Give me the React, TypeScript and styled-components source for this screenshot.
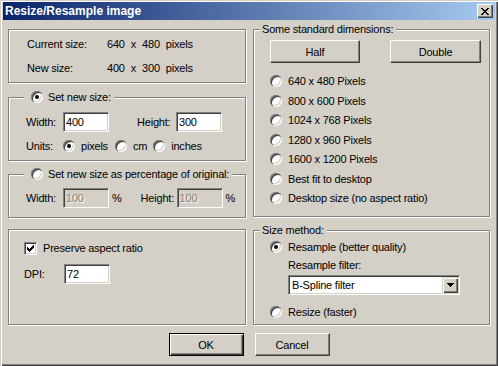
import styled, { createGlobalStyle } from 'styled-components';

const GlobalStyle = createGlobalStyle`
  html, body {
    margin: 0;
    padding: 0;
    background: #d4d0c8;
  }
  body {
    font-family: "Liberation Sans", Arial, sans-serif;
    font-size: 11px;
    letter-spacing: -0.2px;
    color: #000;
  }
`;

const Window = styled.div`
  width: 498px;
  height: 366px;
  box-sizing: border-box;
  padding: 2px 3px 3px 3px;
  background: #d4d0c8;
  box-shadow: inset 1px 1px 0 #d4d0c8, inset 2px 2px 0 #fff, inset -1px -1px 0 #404040,
    inset -2px -2px 0 #808080;
  display: flex;
  flex-direction: column;
`;

const TitleBar = styled.div`
  height: 18px;
  display: flex;
  align-items: center;
  justify-content: space-between;
  padding: 0 2px 0 2px;
  background: linear-gradient(to right, #0a246a, #a6caf0);
`;

const TitleText = styled.span`
  color: #fff;
  font-weight: bold;
  font-size: 12px;
  letter-spacing: 0;
`;

const CloseButton = styled.div`
  width: 16px;
  height: 14px;
  box-sizing: border-box;
  background: #d4d0c8;
  box-shadow: inset 1px 1px 0 #fff, inset -1px -1px 0 #404040, inset -2px -2px 0 #808080;
  display: flex;
  align-items: center;
  justify-content: center;
`;

const Body = styled.div`
  display: flex;
  flex-direction: column;
  align-items: center;
`;

const Columns = styled.div`
  display: grid;
  grid-template-columns: 238px 237px;
  column-gap: 7px;
  padding: 0 5px;
  align-self: stretch;
`;

const Column = styled.div`
  display: flex;
  flex-direction: column;
`;

const GroupBox = styled.div<{ $height: number; $top: number; $pad?: string }>`
  position: relative;
  box-sizing: border-box;
  height: ${(p) => p.$height}px;
  margin-top: ${(p) => p.$top}px;
  padding: ${(p) => p.$pad || '0'};
  border: 1px solid #808080;
  box-shadow: inset 1px 1px 0 #fff, 1px 1px 0 #fff;
  display: flex;
  flex-direction: column;
`;

const Caption = styled.div<{ $left: number; $padLeft?: number }>`
  position: absolute;
  top: -8px;
  left: ${(p) => p.$left}px;
  height: 14px;
  line-height: 14px;
  padding: 0 3px 0 ${(p) => p.$padLeft ?? 2}px;
  background: #d4d0c8;
  display: flex;
  align-items: center;
  gap: 5px;
  white-space: nowrap;
`;

const InfoRow = styled.div<{ $gap?: number }>`
  display: flex;
  height: 14px;
  line-height: 14px;
  margin-top: ${(p) => p.$gap || 0}px;
`;

const InfoLabel = styled.span`
  width: 80px;
`;

const InfoValue = styled.span`
  display: flex;
  gap: 6px;
`;

const FieldRow = styled.div<{ $gap?: number }>`
  display: flex;
  align-items: center;
  height: 20px;
  margin-top: ${(p) => p.$gap || 0}px;
`;

const Label = styled.span<{ $w?: number; $ml?: number }>`
  width: ${(p) => (p.$w ? `${p.$w}px` : 'auto')};
  margin-left: ${(p) => p.$ml || 0}px;
  flex: none;
  white-space: nowrap;
`;

const Field = styled.input<{ $w?: number }>`
  width: ${(p) => p.$w || 46}px;
  height: 20px;
  box-sizing: border-box;
  margin: 0;
  padding: 0 2px;
  font: inherit;
  letter-spacing: inherit;
  color: #000;
  background: #fff;
  border: 1px solid;
  border-color: #808080 #fff #fff #808080;
  box-shadow: inset 1px 1px 0 #404040, inset -1px -1px 0 #d4d0c8;
  outline: none;
  flex: none;

  &:disabled {
    background: #d4d0c8;
    color: #808080;
    text-shadow: 1px 1px 0 #fff;
  }
`;

const Percent = styled.span`
  margin-left: 3px;
  color: #000;
`;

const OptionRow = styled.div<{ $gap?: number; $indent?: number }>`
  display: flex;
  align-items: center;
  height: 14px;
  margin-top: ${(p) => p.$gap || 0}px;
  margin-left: ${(p) => p.$indent || 0}px;
  white-space: nowrap;
`;

const Option = styled.span<{ $after?: number }>`
  display: inline-flex;
  align-items: center;
  gap: 6px;
  margin-right: ${(p) => p.$after || 0}px;
`;

const RadioDot = styled.span<{ $checked?: boolean }>`
  position: relative;
  width: 12px;
  height: 12px;
  border-radius: 50%;
  background: #fff;
  flex: none;
  box-shadow: inset 1px 1px 0 #808080, inset 2px 2px 0 #404040, inset -1px -1px 0 #fff,
    inset -2px -2px 0 #d4d0c8;

  &::after {
    content: '';
    display: ${(p) => (p.$checked ? 'block' : 'none')};
    position: absolute;
    left: 4px;
    top: 4px;
    width: 4px;
    height: 4px;
    border-radius: 50%;
    background: #000;
  }
`;

const CheckBox = styled.span`
  width: 13px;
  height: 13px;
  box-sizing: border-box;
  background: #fff;
  border: 1px solid;
  border-color: #808080 #fff #fff #808080;
  box-shadow: inset 1px 1px 0 #404040, inset -1px -1px 0 #d4d0c8;
  display: flex;
  align-items: center;
  justify-content: center;
  flex: none;
`;

const RadioList = styled.div`
  display: flex;
  flex-direction: column;
  gap: 5.5px;
  margin-top: 11px;
`;

const ButtonRow = styled.div<{ $gap: number; $top: number }>`
  display: flex;
  gap: ${(p) => p.$gap}px;
  margin-top: ${(p) => p.$top}px;
`;

const Button = styled.button<{ $w?: number; $default?: boolean }>`
  width: ${(p) => p.$w || 75}px;
  height: 23px;
  box-sizing: border-box;
  margin: 0;
  padding: 0;
  font: inherit;
  letter-spacing: inherit;
  color: #000;
  background: #d4d0c8;
  border: 1px solid;
  border-color: ${(p) => (p.$default ? '#000' : '#fff #404040 #404040 #fff')};
  box-shadow: ${(p) =>
    p.$default
      ? 'inset 1px 1px 0 #fff, inset -1px -1px 0 #404040, inset -2px -2px 0 #808080'
      : 'inset -1px -1px 0 #808080'};
  flex: none;
`;

const Combo = styled.div`
  width: 172px;
  height: 20px;
  box-sizing: border-box;
  margin-top: 3px;
  margin-left: 18px;
  background: #fff;
  border: 1px solid;
  border-color: #808080 #fff #fff #808080;
  box-shadow: inset 1px 1px 0 #404040, inset -1px -1px 0 #d4d0c8;
  display: flex;
  align-items: center;
  justify-content: space-between;
  padding: 1px 1px 1px 3px;
`;

const ComboArrow = styled.span`
  width: 16px;
  height: 16px;
  box-sizing: border-box;
  background: #d4d0c8;
  box-shadow: inset 1px 1px 0 #d4d0c8, inset 2px 2px 0 #fff, inset -1px -1px 0 #404040,
    inset -2px -2px 0 #808080;
  display: flex;
  align-items: center;
  justify-content: center;
`;

const CloseGlyph = () => (
  <svg width="8" height="7" viewBox="0 0 8 7" shapeRendering="crispEdges">
    <path
      d="M0 0h2v1h-2zM6 0h2v1h-2zM1 1h2v1h-2zM5 1h2v1h-2zM2 2h4v1h-4zM3 3h2v1h-2zM2 4h4v1h-4zM1 5h2v1h-2zM5 5h2v1h-2zM0 6h2v1h-2zM6 6h2v1h-2z"
      fill="#000"
    />
  </svg>
);

const CheckGlyph = () => (
  <svg width="7" height="7" viewBox="0 0 7 7" shapeRendering="crispEdges">
    <path
      d="M0 2h1v3h-1zM1 3h1v3h-1zM2 4h1v3h-1zM3 3h1v3h-1zM4 2h1v3h-1zM5 1h1v3h-1zM6 0h1v3h-1z"
      fill="#000"
    />
  </svg>
);

const ArrowGlyph = () => (
  <svg width="7" height="4" viewBox="0 0 7 4" shapeRendering="crispEdges">
    <path d="M0 0h7v1h-7zM1 1h5v1h-5zM2 2h3v1h-3zM3 3h1v1h-1z" fill="#000" />
  </svg>
);

const presets = [
  '640 x 480 Pixels',
  '800 x 600 Pixels',
  '1024 x 768 Pixels',
  '1280 x 960 Pixels',
  '1600 x 1200 Pixels',
  'Best fit to desktop',
  'Desktop size (no aspect ratio)',
];

const App = () => {
  return (
    <>
      <GlobalStyle />
      <Window>
        <TitleBar>
          <TitleText>Resize/Resample image</TitleText>
          <CloseButton>
            <CloseGlyph />
          </CloseButton>
        </TitleBar>
        <Body>
          <Columns>
            <Column>
              <GroupBox $height={54} $top={9} $pad="7px 0 0 18px">
                <InfoRow>
                  <InfoLabel>Current size:</InfoLabel>
                  <InfoValue>
                    <span>640</span>
                    <span>x</span>
                    <span>480</span>
                    <span>pixels</span>
                  </InfoValue>
                </InfoRow>
                <InfoRow $gap={10}>
                  <InfoLabel>New size:</InfoLabel>
                  <InfoValue>
                    <span>400</span>
                    <span>x</span>
                    <span>300</span>
                    <span>pixels</span>
                  </InfoValue>
                </InfoRow>
              </GroupBox>

              <GroupBox $height={64} $top={14} $pad="14px 0 0 17px">
                <Caption $left={15} $padLeft={7}>
                  <RadioDot $checked />
                  <span>Set new size:</span>
                </Caption>
                <FieldRow>
                  <Label $w={37}>Width:</Label>
                  <Field defaultValue="400" />
                  <Label $w={39} $ml={28}>Height:</Label>
                  <Field defaultValue="300" />
                </FieldRow>
                <OptionRow $gap={7}>
                  <Label $w={37}>Units:</Label>
                  <Option $after={7}>
                    <RadioDot $checked />
                    pixels
                  </Option>
                  <Option $after={6}>
                    <RadioDot />
                    cm
                  </Option>
                  <Option>
                    <RadioDot />
                    inches
                  </Option>
                </OptionRow>
              </GroupBox>

              <GroupBox $height={44} $top={13} $pad="13px 0 0 17px">
                <Caption $left={15} $padLeft={7}>
                  <RadioDot />
                  <span>Set new size as percentage of original:</span>
                </Caption>
                <FieldRow>
                  <Label $w={37}>Width:</Label>
                  <Field defaultValue="100" disabled />
                  <Percent>%</Percent>
                  <Label $w={36} $ml={19}>Height:</Label>
                  <Field defaultValue="100" disabled />
                  <Percent>%</Percent>
                </FieldRow>
              </GroupBox>

              <GroupBox $height={96} $top={11} $pad="11px 0 0 15px">
                <OptionRow>
                  <Option>
                    <CheckBox>
                      <CheckGlyph />
                    </CheckBox>
                    Preserve aspect ratio
                  </Option>
                </OptionRow>
                <FieldRow $gap={9}>
                  <Label $w={40}>DPI:</Label>
                  <Field defaultValue="72" />
                </FieldRow>
              </GroupBox>
            </Column>

            <Column>
              <GroupBox $height={188} $top={9} $pad="10px 0 0 16px">
                <Caption $left={6}>Some standard dimensions:</Caption>
                <ButtonRow $gap={30} $top={0}>
                  <Button $w={90}>Half</Button>
                  <Button $w={91}>Double</Button>
                </ButtonRow>
                <RadioList>
                  {presets.map((p, i) => (
                    <OptionRow key={`preset-${i}`}>
                      <Option>
                        <RadioDot />
                        {p}
                      </Option>
                    </OptionRow>
                  ))}
                </RadioList>
              </GroupBox>

              <GroupBox $height={95} $top={13} $pad="9px 0 0 16px">
                <Caption $left={6}>Size method:</Caption>
                <OptionRow>
                  <Option>
                    <RadioDot $checked />
                    Resample (better quality)
                  </Option>
                </OptionRow>
                <OptionRow $gap={4} $indent={18}>
                  Resample filter:
                </OptionRow>
                <Combo>
                  <span>B-Spline filter</span>
                  <ComboArrow>
                    <ArrowGlyph />
                  </ComboArrow>
                </Combo>
                <OptionRow $gap={10}>
                  <Option>
                    <RadioDot />
                    Resize (faster)
                  </Option>
                </OptionRow>
              </GroupBox>
            </Column>
          </Columns>

          <ButtonRow $gap={11} $top={8}>
            <Button $default>OK</Button>
            <Button>Cancel</Button>
          </ButtonRow>
        </Body>
      </Window>
    </>
  );
};

export default App;
